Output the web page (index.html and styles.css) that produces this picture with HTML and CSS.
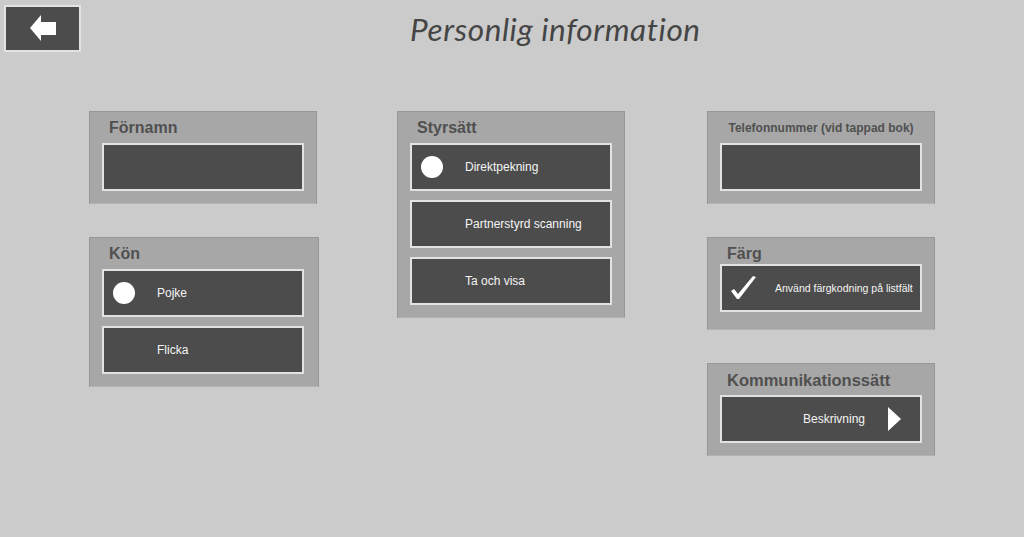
FILE: index.html
```html
<!DOCTYPE html>
<html lang="sv">
<head>
<meta charset="utf-8">
<title>Personlig information</title>
<link rel="stylesheet" href="styles.css">
</head>
<body>
<header class="header">
  <button class="back" aria-label="Tillbaka">
    <svg width="77" height="47" viewBox="0 0 77 47"><polygon points="26,23 37,10 37,17 52,17 52,30 37,30 37,36" fill="#fff"/></svg>
  </button>
  <h1 class="title">Personlig information</h1>
</header>
<main class="main">
  <div class="col">
    <section class="panel">
      <div class="label">Förnamn</div>
      <div class="btn input"></div>
    </section>
    <section class="panel panel-wide">
      <div class="label">Kön</div>
      <div class="btns">
        <div class="btn"><span class="mark"><span class="dot"></span></span><span class="txt">Pojke</span></div>
        <div class="btn"><span class="mark"></span><span class="txt">Flicka</span></div>
      </div>
    </section>
  </div>
  <div class="col">
    <section class="panel">
      <div class="label">Styrsätt</div>
      <div class="btns">
        <div class="btn"><span class="mark"><span class="dot"></span></span><span class="txt">Direktpekning</span></div>
        <div class="btn"><span class="mark"></span><span class="txt">Partnerstyrd scanning</span></div>
        <div class="btn"><span class="mark"></span><span class="txt">Ta och visa</span></div>
      </div>
    </section>
  </div>
  <div class="col col3">
    <section class="panel">
      <div class="label small">Telefonnummer (vid tappad bok)</div>
      <div class="btn input"></div>
    </section>
    <section class="panel panel-farg">
      <div class="label short">Färg</div>
      <div class="btn"><span class="mark check"><svg width="26" height="24" viewBox="0 0 26 24"><path d="M0 15 L3 13 L7 18 L22 0 L25 1 L8 23 L6 23 Z" fill="#fff"/></svg></span><span class="txt tiny">Använd färgkodning på listfält</span></div>
    </section>
    <section class="panel">
      <div class="label wide">Kommunikationssätt</div>
      <div class="btn next"><span class="txt">Beskrivning</span><svg class="tri" width="13" height="24" viewBox="0 0 13 24"><polygon points="0,0 13,12 0,24" fill="#fff"/></svg></div>
    </section>
  </div>
</main>
</body>
</html>
```

FILE: styles.css
```css
* { box-sizing: border-box; }
html, body {
  margin: 0;
  padding: 0;
  background: #cbcbcb;
  height: 100%;
}
body {
  font-family: "Liberation Sans", Arial, sans-serif;
  overflow: hidden;
}
.header {
  display: flex;
  align-items: flex-start;
  height: 60px;
  padding: 5px 0 0 4px;
}
.back {
  width: 77px;
  height: 47px;
  padding: 0;
  margin: 0;
  border: 2px solid #e2e2e2;
  background: #4c4c4c;
  display: block;
  cursor: pointer;
}
.back svg { display: block; margin: -2px; }
.title {
  margin: 6px 0 0 329px;
  font-family: Lato, "DejaVu Sans", sans-serif;
  font-style: italic;
  font-weight: 400;
  font-size: 31.5px;
  line-height: 36px;
  color: #454545;
  letter-spacing: 0.6px;
}
.main {
  display: flex;
  align-items: flex-start;
  gap: 80px;
  padding: 51px 0 0 89px;
}
.col {
  width: 228px;
  display: flex;
  flex-direction: column;
  gap: 33px;
}
.col3 { margin-left: 2px; }
.panel {
  background: #a7a7a7;
  border: 1px solid #979797;
  border-bottom-color: #b3b3b3;
  padding: 0 12px 12px;
}
.panel-wide { width: 230px; padding-right: 14px; }
.panel-farg { padding-bottom: 17px; }
.label {
  padding: 6px 0 5px 7px;
  line-height: 20px;
  font-size: 16px;
  font-weight: bold;
  color: #505050;
}
.label.wide { font-size: 16.5px; }
.label.short { padding-bottom: 0; }
.label.small {
  font-size: 12px;
  text-align: center;
  padding-left: 0;
}
.btns {
  display: flex;
  flex-direction: column;
  gap: 9px;
}
.btn {
  height: 48px;
  background: #4c4c4c;
  border: 2px solid #e2e2e2;
  display: flex;
  align-items: center;
  padding-left: 9px;
  color: #f4f4f4;
  font-size: 12px;
}
.mark {
  width: 22px;
  height: 22px;
  margin-right: 22px;
  flex: none;
  display: flex;
  align-items: center;
}
.dot {
  width: 22px;
  height: 22px;
  border-radius: 50%;
  background: #fff;
}
.mark.check {
  width: 26px;
  height: 24px;
  margin-right: 18px;
}
.mark.check svg { display: block; }
.txt.tiny { font-size: 10.5px; }
.next {
  justify-content: flex-end;
  padding-right: 19px;
}
.tri { margin-left: 23px; display: block; }
```
